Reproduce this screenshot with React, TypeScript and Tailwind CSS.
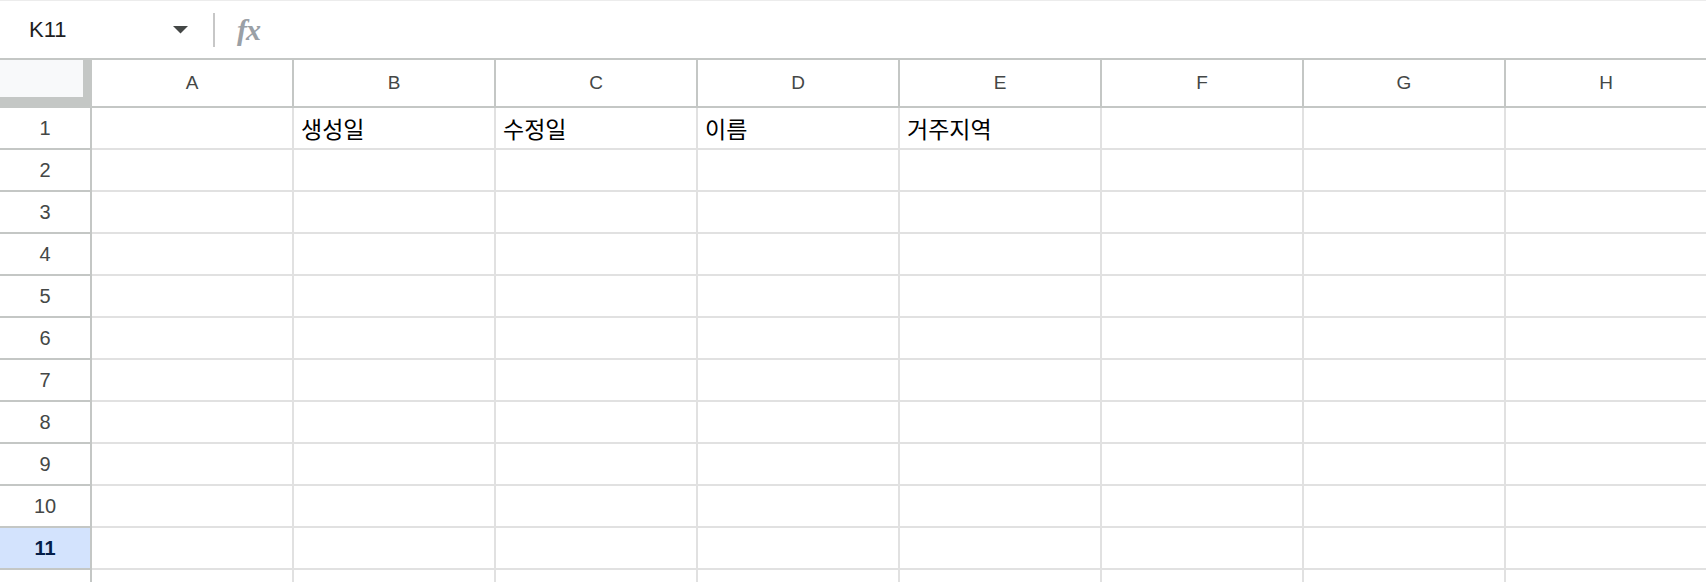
import React from 'react'

const columns = ['A', 'B', 'C', 'D', 'E', 'F', 'G', 'H']

const rows: Record<number, Record<string, string>> = {
    1: { B: '생성일', C: '수정일', D: '이름', E: '거주지역' },
}

const rowNumbers = [1, 2, 3, 4, 5, 6, 7, 8, 9, 10, 11, 12]
const selectedRow = 11

const fontStack = { fontFamily: '"Liberation Sans", Arial, "Noto Sans CJK KR", sans-serif' }

function FormulaBar() {
    return (
        <div className='flex items-center h-[58px] border-t border-[#ececec] bg-white'>
            <div className='flex items-center justify-between w-[213px] pl-[29px] pr-[25px]'>
                <span className='text-[22px] text-[#1f1f1f] leading-none'>K11</span>
                <svg width="15" height="8" viewBox="0 0 15 8">
                    <path d="M0 0 L15 0 L7.5 7.5 Z" fill="#444746" />
                </svg>
            </div>
            <div className='w-[2px] h-[34px] bg-[#c7c7c7]' />
            <span
                className='ml-[22px] text-[30px] italic font-bold text-[#9aa0a6] leading-none tracking-[-1px]'
                style={{ fontFamily: '"Liberation Serif", serif' }}
            >
                fx
            </span>
        </div>
    )
}

function HeaderRow() {
    return (
        <div className='flex h-[48px] border-t-2 border-[#c4c7c5] box-content'>
            <div className='shrink-0 w-[92px] h-[48px] bg-[#c4c7c5]'>
                <div className='w-[83px] h-[37px] bg-[#f8f9fa]' />
            </div>
            {columns.map((c) => (
                <div
                    key={c}
                    className='shrink-0 w-[202px] h-[48px] flex items-center justify-center border-r-2 border-b-2 border-[#c4c7c5] text-[19px] text-[#444746]'
                >
                    {c}
                </div>
            ))}
        </div>
    )
}

function BodyRow({ n }: { n: number }) {
    const selected = n === selectedRow
    return (
        <div className='flex h-[42px]'>
            <div
                className={
                    selected
                        ? 'shrink-0 w-[92px] flex items-center justify-center border-r-2 border-b-2 border-[#c4c7c5] bg-[#d3e3fd] text-[20px] font-bold text-[#041e49]'
                        : 'shrink-0 w-[92px] flex items-center justify-center border-r-2 border-b-2 border-[#c4c7c5] text-[20px] text-[#444746]'
                }
            >
                {n}
            </div>
            {columns.map((c) => (
                <div
                    key={c}
                    className='shrink-0 w-[202px] flex items-end pl-[7px] pb-[6px] border-r-2 border-b-2 border-[#e1e1e1] text-[23px] text-black leading-none whitespace-nowrap'
                    style={{ fontFamily: '"Liberation Sans", "Noto Sans CJK KR", sans-serif' }}
                >
                    {rows[n]?.[c] ?? ''}
                </div>
            ))}
        </div>
    )
}

export default function App() {
    return (
        <div className='w-[1706px] h-[582px] overflow-hidden bg-white' style={fontStack}>
            <FormulaBar />
            <HeaderRow />
            {rowNumbers.map((n) => (
                <BodyRow key={n} n={n} />
            ))}
        </div>
    )
}
